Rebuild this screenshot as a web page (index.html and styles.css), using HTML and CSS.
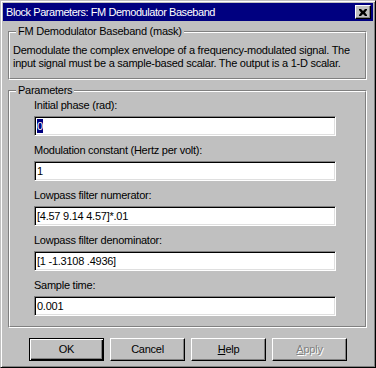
FILE: index.html
```html
<!DOCTYPE html>
<html>
<head>
<meta charset="utf-8">
<link rel="stylesheet" href="styles.css">
</head>
<body>
<div class="window">
  <div class="titlebar">
    <span class="title">Block Parameters: FM Demodulator Baseband</span>
    <span class="close"><svg width="8" height="7" viewBox="0 0 8 7"><path d="M0 0h2l2 2 2-2h2v1l-2 2.5 2 2.5v1h-2l-2-2-2 2h-2v-1l2-2.5-2-2.5z" fill="#000"/></svg></span>
  </div>
  <div class="body">
    <div class="group g1">
      <span class="legend">FM Demodulator Baseband (mask)</span>
      <div class="group-inner g1-inner">
        <p class="desc">Demodulate the complex envelope of a frequency-modulated signal. The<br>input signal must be a sample-based scalar. The output is a 1-D scalar.</p>
      </div>
    </div>
    <div class="group g2">
      <span class="legend">Parameters</span>
      <div class="group-inner g2-inner">
        <div class="field">
          <div class="label">Initial phase (rad):</div>
          <div class="input"><span class="sel">0</span></div>
        </div>
        <div class="field">
          <div class="label">Modulation constant (Hertz per volt):</div>
          <div class="input">1</div>
        </div>
        <div class="field">
          <div class="label">Lowpass filter numerator:</div>
          <div class="input">[4.57 9.14 4.57]*.01</div>
        </div>
        <div class="field">
          <div class="label">Lowpass filter denominator:</div>
          <div class="input">[1 -1.3108 .4936]</div>
        </div>
        <div class="field">
          <div class="label">Sample time:</div>
          <div class="input">0.001</div>
        </div>
      </div>
    </div>
    <div class="buttons">
      <div class="btn default">OK</div>
      <div class="btn">Cancel</div>
      <div class="btn"><span class="u">H</span>elp</div>
      <div class="btn disabled"><span class="u">A</span>pply</div>
    </div>
  </div>
</div>
</body>
</html>
```

FILE: styles.css
```css
* { box-sizing: border-box; }
html, body { margin: 0; padding: 0; background: #c0c0c0; }
body {
  font-family: "Liberation Sans", Arial, sans-serif;
  font-size: 11px;
  line-height: 13px;
  letter-spacing: -0.25px;
  color: #000;
}
.window {
  width: 376px;
  height: 368px;
  background: #c0c0c0;
  border: 1px solid;
  border-color: #c0c0c0 #000 #000 #c0c0c0;
  box-shadow: inset 1px 1px 0 #fff, inset -1px -1px 0 #808080;
  padding: 2px;
  display: flex;
  flex-direction: column;
  overflow: hidden;
}
.titlebar {
  flex: 0 0 18px;
  height: 18px;
  background: #000080;
  color: #fff;
  display: flex;
  align-items: center;
  justify-content: space-between;
  padding: 0 2px 0 3px;
}
.title { font-size: 11px; letter-spacing: -0.45px; white-space: nowrap; }
.close {
  width: 16px;
  height: 14px;
  background: #c0c0c0;
  border: 1px solid;
  border-color: #fff #000 #000 #fff;
  box-shadow: inset -1px -1px 0 #808080;
  display: flex;
  align-items: center;
  justify-content: center;
}
.body {
  padding: 10px 6px 0 5px;
  display: flex;
  flex-direction: column;
}
.group {
  position: relative;
  border: 1px solid;
  border-color: #808080 #fff #fff #808080;
}
.group-inner {
  border: 1px solid;
  border-color: #fff #808080 #808080 #fff;
}
.legend {
  position: absolute;
  left: 7px;
  top: -7px;
  padding: 0 2px;
  background: #c0c0c0;
  line-height: 13px;
  white-space: nowrap;
}
.g1-inner { padding: 11px 3px 8px 3px; }
.desc { margin: 0; white-space: nowrap; }
.g2 { margin-top: 10px; }
.g2-inner { padding: 7px 0 10px 24px; }
.field { margin-bottom: 8px; }
.field:last-child { margin-bottom: 0; }
.label { margin-bottom: 4px; height: 13px; white-space: nowrap; }
.input {
  width: 302px;
  height: 20px;
  background: #fff;
  border: 1px solid;
  border-color: #808080 #fff #fff #808080;
  box-shadow: inset 1px 1px 0 #000, inset -1px -1px 0 #dfdfdf;
  padding: 3px 2px 0 2px;
  white-space: nowrap;
}
.sel { background: #000080; color: #fff; padding: 1px 0; }
.buttons {
  display: flex;
  gap: 6px;
  margin: 10px 0 0 21px;
}
.btn {
  width: 75px;
  height: 23px;
  border: 1px solid;
  border-color: #fff #000 #000 #fff;
  box-shadow: inset -1px -1px 0 #808080;
  display: flex;
  align-items: center;
  justify-content: center;
}
.btn.default {
  border-color: #000;
  box-shadow: inset 1px 1px 0 #fff, inset -1px -1px 0 #000, inset -2px -2px 0 #808080;
}
.u { text-decoration: underline; }
.btn.disabled { color: #808080; text-shadow: 1px 1px 0 #fff; }
```
